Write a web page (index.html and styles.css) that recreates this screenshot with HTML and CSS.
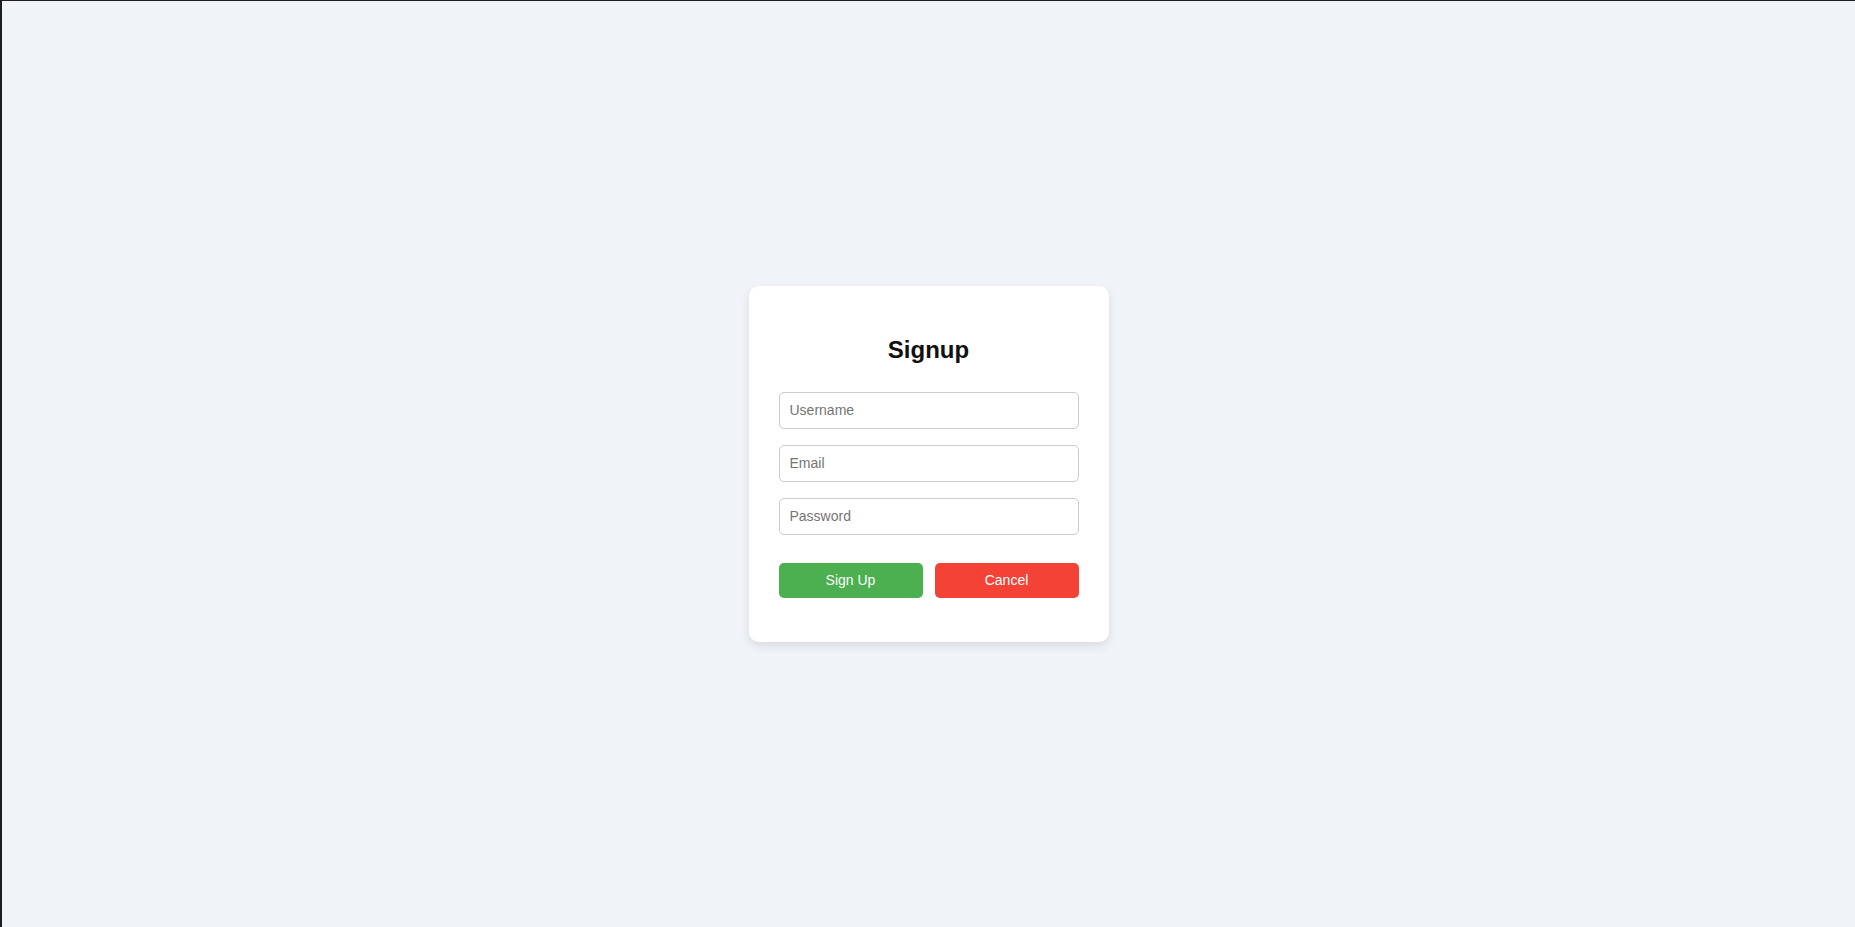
FILE: index.html
```html
<!DOCTYPE html>
<html lang="en">
<head>
<meta charset="utf-8">
<title>Signup</title>
<link rel="stylesheet" href="styles.css">
</head>
<body>
<main class="page">
  <div class="card">
    <h2 class="title">Signup</h2>
    <form class="form">
      <input class="field" type="text" placeholder="Username">
      <input class="field" type="email" placeholder="Email">
      <input class="field" type="password" placeholder="Password">
      <div class="actions">
        <button class="btn btn-primary" type="button">Sign Up</button>
        <button class="btn btn-danger" type="button">Cancel</button>
      </div>
    </form>
  </div>
</main>
</body>
</html>
```

FILE: styles.css
```css
html, body {
  margin: 0;
  padding: 0;
  height: 100%;
}
body {
  font-family: "Liberation Sans", Arial, sans-serif;
  background: #f0f4f8;
  box-sizing: border-box;
  border-top: 1px solid #1e1e1e;
  border-left: 2px solid #1e1e1e;
}
.page {
  height: 100%;
  display: flex;
  align-items: center;
  justify-content: center;
}
.card {
  width: 360px;
  box-sizing: border-box;
  padding: 30px;
  background: #fff;
  border-radius: 10px;
  box-shadow: 0 4px 10px rgba(0, 0, 0, 0.1);
}
.title {
  margin: 20px 0 28px;
  text-align: center;
  font-size: 24px;
  font-weight: bold;
  color: #111;
}
.form {
  display: flex;
  flex-direction: column;
  gap: 16px;
  margin: 0 0 14px;
}
.field {
  display: block;
  width: 100%;
  box-sizing: border-box;
  padding: 10px;
  font-family: "Liberation Sans", Arial, sans-serif;
  font-size: 14px;
  line-height: 15px;
  border: 1px solid #ccc;
  border-radius: 5px;
  color: #333;
  background: #fff;
  outline: none;
}
.field::placeholder {
  color: #757575;
}
.actions {
  display: flex;
  gap: 12px;
  margin-top: 12px;
}
.btn {
  flex: 1;
  padding: 10px;
  font-family: "Liberation Sans", Arial, sans-serif;
  font-size: 14px;
  line-height: 15px;
  color: #fff;
  border: none;
  border-radius: 5px;
  cursor: pointer;
}
.btn-primary {
  background: #4caf50;
}
.btn-danger {
  background: #f44336;
}
```
